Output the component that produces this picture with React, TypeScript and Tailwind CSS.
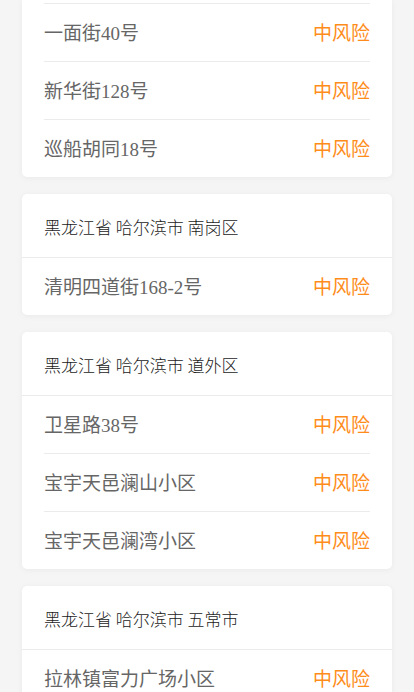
const groups = [
  {
    region: null as string | null,
    places: ["一面街40号", "新华街128号", "巡船胡同18号"],
  },
  {
    region: "黑龙江省 哈尔滨市 南岗区",
    places: ["清明四道街168-2号"],
  },
  {
    region: "黑龙江省 哈尔滨市 道外区",
    places: ["卫星路38号", "宝宇天邑澜山小区", "宝宇天邑澜湾小区"],
  },
  {
    region: "黑龙江省 哈尔滨市 五常市",
    places: ["拉林镇富力广场小区"],
  },
];

function RiskRow({ name, first }: { name: string; first: boolean }) {
  return (
    <div className={`mx-[22px] flex items-center ${first ? "h-[57px]" : "h-[58px] border-t border-[#ebebeb]"}`}>
      <div className="flex-1 flex items-baseline justify-between text-[19px] leading-[24px]">
        <span className="text-[#666] font-['Liberation_Serif','Noto_Sans_CJK_SC',serif]">{name}</span>
        <span className="text-[#ff8c1a] font-['Noto_Sans_CJK_SC',sans-serif]">中风险</span>
      </div>
    </div>
  );
}

export default function App() {
  return (
    <div className="h-[692px] overflow-hidden bg-[#f5f5f5] px-[22px]">
      <div className="flex flex-col gap-[17px]">
        {groups.map((g, gi) => (
          <div
            key={gi}
            className={`bg-white shadow-[0_1px_6px_rgba(0,0,0,0.05)] ${gi === 0 ? "rounded-b-[5px] pt-[3px]" : "rounded-[5px]"}`}
          >
            {g.region && (
              <div className="h-[64px] px-[22px] pt-[2px] flex items-center border-b border-[#ebebeb] text-[17px] font-light text-[#1a1a1a] font-['Noto_Sans_CJK_SC',sans-serif]">
                {g.region}
              </div>
            )}
            {g.places.map((p, i) => (
              <RiskRow key={p} name={p} first={i === 0 && !!g.region} />
            ))}
          </div>
        ))}
      </div>
    </div>
  );
}
